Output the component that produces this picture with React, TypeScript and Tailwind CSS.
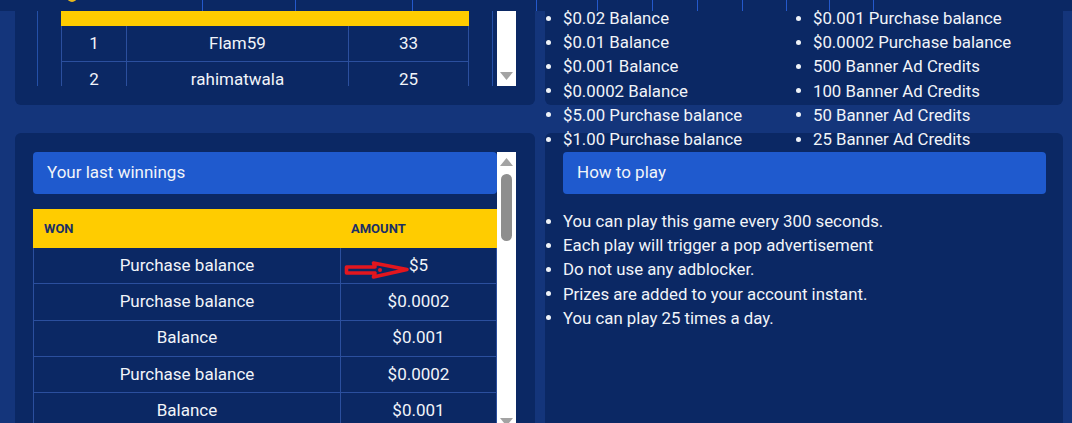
import React from 'react';

const bandCells = [93, 117, 124, 61, 55, 45, 45, 44, 43, 44];

const prizesLeft = [
  '$0.02 Balance',
  '$0.01 Balance',
  '$0.001 Balance',
  '$0.0002 Balance',
  '$5.00 Purchase balance',
  '$1.00 Purchase balance',
];

const prizesRight = [
  '$0.001 Purchase balance',
  '$0.0002 Purchase balance',
  '500 Banner Ad Credits',
  '100 Banner Ad Credits',
  '50 Banner Ad Credits',
  '25 Banner Ad Credits',
];

const rules = [
  'You can play this game every 300 seconds.',
  'Each play will trigger a pop advertisement',
  'Do not use any adblocker.',
  'Prizes are added to your account instant.',
  'You can play 25 times a day.',
];

const winnings = [
  { won: 'Purchase balance', amount: '$5', arrow: true },
  { won: 'Purchase balance', amount: '$0.0002' },
  { won: 'Balance', amount: '$0.001' },
  { won: 'Purchase balance', amount: '$0.0002' },
  { won: 'Balance', amount: '$0.001' },
  { won: 'Balance', amount: '$0.01' },
];

function Arrow({ dir }: { dir: 'up' | 'down' }) {
  return (
    <svg width="13" height="8" viewBox="0 0 13 8">
      {dir === 'up' ? (
        <polygon points="6.5,0 13,8 0,8" fill="#a3a3a3" />
      ) : (
        <polygon points="0,0 13,0 6.5,8" fill="#a3a3a3" />
      )}
    </svg>
  );
}

function RedArrow() {
  return (
    <svg className="absolute left-[3px] top-[12px]" width="66" height="20" viewBox="0 0 66 20">
      <path
        d="M2.5 7 L31 7 L29.5 3 L63 9.5 L29.5 17 L31 13 L2.5 13 Z"
        fill="none"
        stroke="#e3161e"
        strokeWidth="3.6"
        strokeLinejoin="round"
      />
      <circle cx="36" cy="10" r="2" fill="#e3161e" />
    </svg>
  );
}

function Bullet({ text }: { text: string }) {
  return (
    <li className="flex items-center">
      <span className="w-[18px] shrink-0">
        <span className="ml-[1px] block h-[5px] w-[5px] rounded-full bg-[#eef2f8]" />
      </span>
      <span>{text}</span>
    </li>
  );
}

export default function App() {
  return (
    <div className="w-[1072px] h-[423px] overflow-hidden bg-[#14357b] font-['Roboto',sans-serif] text-[17px] text-[#f1f4f9]">
      {/* cropped header strip of the section above */}
      <div className="flex h-[11px] bg-[#0b2864] overflow-hidden">
        <div className="w-[202px] shrink-0">
          <span className="block ml-[67px] -mt-[8px] h-[10px] w-[10px] rounded-full bg-[#e8b81c]" />
        </div>
        {bandCells.map((w, i) => (
          <div key={i} className="shrink-0 border-l border-[#2459cc]" style={{ width: w }} />
        ))}
        <div className="flex-1 border-l border-[#2459cc]" />
      </div>

      <div className="flex gap-[10px] pl-[15px] pr-[9px]">
        {/* left column */}
        <div className="w-[520px] shrink-0">
          <div className="h-[94px] rounded-b-[6px] bg-[#0b2864] pl-[18px] pr-[19px]">
            <div className="flex h-[75px]">
              <div className="flex-1 overflow-hidden px-[4px]">
                <div className="h-full border-x border-[#2450a8] px-[23px]">
                  <div className="h-[15px] bg-[#ffcc00]" />
                  {[
                    ['1', 'Flam59', '33'],
                    ['2', 'rahimatwala', '25'],
                  ].map((r) => (
                    <div key={r[0]} className="grid h-[36px] grid-cols-[65px_222px_1fr] border-x border-b border-[#2b4f9e]">
                      <div className="flex items-center justify-center border-r border-[#2b4f9e]">{r[0]}</div>
                      <div className="flex items-center justify-center border-r border-[#2b4f9e]">{r[1]}</div>
                      <div className="flex items-center justify-center">{r[2]}</div>
                    </div>
                  ))}
                </div>
              </div>
              <div className="flex w-[19px] flex-col items-center justify-end bg-white pb-[6px]">
                <Arrow dir="down" />
              </div>
            </div>
          </div>

          <div className="mt-[28px] h-[320px] rounded-[6px] bg-[#0b2864] pl-[18px] pr-[19px] pt-[19px]">
            <div className="flex h-full">
              <div className="flex-1 overflow-hidden">
                <div className="flex h-[42px] items-center rounded-[4px] bg-[#1f5ace] pl-[14px]">Your last winnings</div>
                <div className="mt-[15px]">
                  <div className="grid h-[39px] grid-cols-[307px_1fr] items-center bg-[#ffcc00] text-[13px] font-bold text-[#1a2f66]">
                    <div className="pl-[11px]">WON</div>
                    <div className="pl-[11px]">AMOUNT</div>
                  </div>
                  {winnings.map((w, i) => (
                    <div key={i} className="grid h-[36.25px] grid-cols-[307px_1fr] border-x border-b border-[#2b4f9e]">
                      <div className="flex items-center justify-center border-r border-[#2b4f9e]">{w.won}</div>
                      <div className="relative flex items-center justify-center">
                        {w.arrow && <RedArrow />}
                        {w.amount}
                      </div>
                    </div>
                  ))}
                </div>
              </div>
              <div className="relative w-[19px] bg-white">
                <div className="flex justify-center pt-[6px]">
                  <Arrow dir="up" />
                </div>
                <div className="mx-auto mt-[8px] h-[67px] w-[11px] rounded-full bg-[#8e8e8e]" />
                <div className="absolute left-[3px] top-[266px]">
                  <Arrow dir="down" />
                </div>
              </div>
            </div>
          </div>
        </div>

        {/* right column */}
        <div className="w-[518px] shrink-0">
          <div className="flow-root h-[94px] rounded-b-[6px] bg-[#0b2864] text-[16.8px]">
            <div className="-mt-[5px] flex leading-[24.2px]">
              <ul className="w-[250px]">
                {prizesLeft.map((p) => (
                  <Bullet key={p} text={p} />
                ))}
              </ul>
              <ul className="w-[250px]">
                {prizesRight.map((p) => (
                  <Bullet key={p} text={p} />
                ))}
              </ul>
            </div>
          </div>

          <div className="mt-[28px] h-[320px] rounded-[6px] bg-[#0b2864] pl-[18px] pr-[17px] pt-[19px]">
            <div className="flex h-[42px] items-center rounded-[4px] bg-[#1f5ace] pl-[14px]">How to play</div>
            <ul className="-ml-[18px] mt-[15px] text-[16.8px] leading-[24.2px]">
              {rules.map((r) => (
                <Bullet key={r} text={r} />
              ))}
            </ul>
          </div>
        </div>
      </div>
    </div>
  );
}
